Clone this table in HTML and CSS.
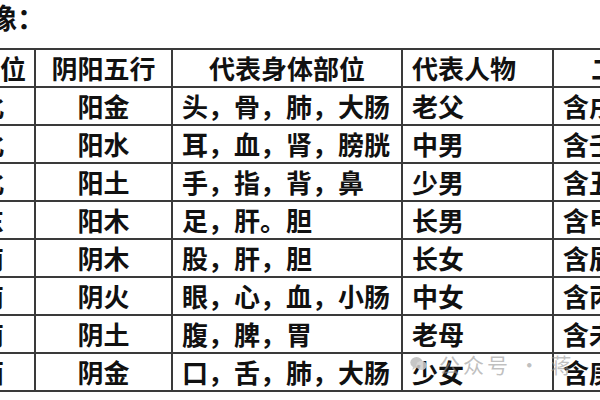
FILE: index.html
```html
<!DOCTYPE html>
<html lang="zh-CN">
<head>
<meta charset="utf-8">
<link rel="stylesheet" href="styles.css">
</head>
<body>
<div class="title">像：</div>
<div class="table">
  <div class="cell c1 head">方位</div>
  <div class="cell c2">阴阳五行</div>
  <div class="cell c3 center">代表身体部位</div>
  <div class="cell c4">代表人物</div>
  <div class="cell c5 center">二十四山</div>

  <div class="cell c1">西北</div><div class="cell c2">阳金</div><div class="cell c3">头，骨，肺，大肠</div><div class="cell c4">老父</div><div class="cell c5">含戌乾亥</div>
  <div class="cell c1">正北</div><div class="cell c2">阳水</div><div class="cell c3">耳，血，肾，膀胱</div><div class="cell c4">中男</div><div class="cell c5">含壬子癸</div>
  <div class="cell c1">东北</div><div class="cell c2">阳土</div><div class="cell c3">手，指，背，鼻</div><div class="cell c4">少男</div><div class="cell c5">含丑艮寅</div>
  <div class="cell c1">正东</div><div class="cell c2">阳木</div><div class="cell c3">足，肝。胆</div><div class="cell c4">长男</div><div class="cell c5">含甲卯乙</div>
  <div class="cell c1">东南</div><div class="cell c2">阴木</div><div class="cell c3">股，肝，胆</div><div class="cell c4">长女</div><div class="cell c5">含辰巽巳</div>
  <div class="cell c1">正南</div><div class="cell c2">阴火</div><div class="cell c3">眼，心，血，小肠</div><div class="cell c4">中女</div><div class="cell c5">含丙午丁</div>
  <div class="cell c1">西南</div><div class="cell c2">阴土</div><div class="cell c3">腹，脾，胃</div><div class="cell c4">老母</div><div class="cell c5">含未坤申</div>
  <div class="cell c1">正西</div><div class="cell c2">阴金</div><div class="cell c3">口，舌，肺，大肠</div><div class="cell c4">少女</div><div class="cell c5">含庚酉辛</div>
</div>
<div class="wm">
  <svg class="wm-icon" width="17" height="16" viewBox="0 0 17 16" aria-hidden="true">
    <ellipse cx="6.5" cy="6.5" rx="6.2" ry="5.4" fill="#bdbdbd"/>
    <path d="M3 11 L2.4 14 L6 11.6 Z" fill="#bdbdbd"/>
    <ellipse cx="11.5" cy="9.5" rx="5.2" ry="4.6" fill="#cfcfcf"/>
  </svg>
  <span>公众号 · 蒋</span>
</div>
</body>
</html>
```
FILE: styles.css
```css
html, body {
  margin: 0;
  padding: 0;
  background: #ffffff;
  overflow: hidden;
}
body {
  width: 600px;
  height: 400px;
  position: relative;
  font-family: "Noto Sans CJK SC", "Noto Sans", sans-serif;
  color: #111111;
}
.title {
  height: 48px;
  line-height: 34px;
  font-size: 28px;
  font-weight: 700;
  margin-left: -11px;
  white-space: nowrap;
}
.table {
  display: grid;
  grid-template-columns: 101px 137px 230px 151px 180px;
  width: 799px;
  margin-left: -65px;
  border-top: 2px solid #3a3a3a;
}
.cell {
  box-sizing: border-box;
  height: 38px;
  border-right: 2px solid #3a3a3a;
  border-bottom: 2px solid #3a3a3a;
  font-size: 26px;
  line-height: 36px;
  font-weight: 600;
  white-space: nowrap;
  overflow: hidden;
}
.c1 {
  text-align: right;
  padding-right: 30px;
}
.c1.head {
  padding-right: 8px;
}
.c2 {
  text-align: center;
}
.c3, .c4, .c5 {
  padding-left: 9px;
}
.center {
  text-align: center;
  padding-left: 0;
}
.wm {
  position: absolute;
  left: 410px;
  top: 352px;
  display: flex;
  align-items: center;
  gap: 12px;
  font-size: 21px;
  line-height: 24px;
  letter-spacing: 3px;
  color: rgba(150, 150, 150, 0.6);
  white-space: nowrap;
}
.wm-icon {
  opacity: 0.85;
}
```
